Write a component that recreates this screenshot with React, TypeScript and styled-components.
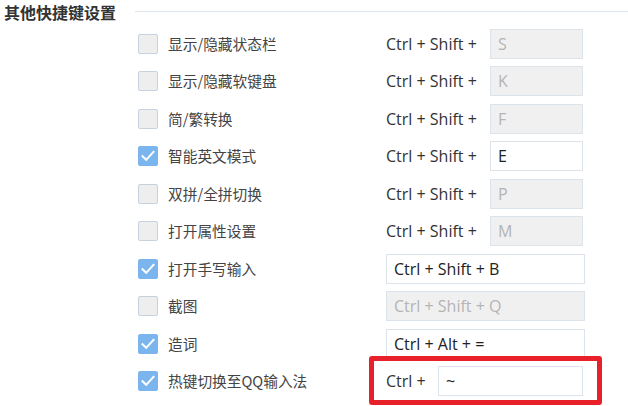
import React from "react";
import styled, { createGlobalStyle } from "styled-components";

const Global = createGlobalStyle`
  html, body { margin: 0; padding: 0; background: #ffffff; }
  body { width: 628px; height: 406px; overflow: hidden; }
`;

const Page = styled.div`
  position: relative;
  width: 628px;
  height: 406px;
  background: #ffffff;
  font-family: "Noto Sans CJK SC", "Microsoft YaHei", sans-serif;
`;

const Header = styled.div`
  display: flex;
  align-items: center;
  height: 25px;
  padding-left: 4px;
`;

const Title = styled.div`
  font-size: 16px;
  font-weight: 700;
  color: #333333;
  line-height: 25px;
  width: 131px;
`;

const Rule = styled.div`
  flex: 1;
  height: 1px;
  background: #dfe5ec;
  margin-top: -2px;
`;

const List = styled.div`
  display: grid;
  grid-template-columns: 20px 208px auto;
  grid-auto-rows: 37.5px;
  column-gap: 10px;
  align-items: center;
  padding-left: 138px;
`;

const Box = styled.div<{ $checked: boolean }>`
  width: 20px;
  height: 20px;
  box-sizing: border-box;
  border-radius: 2px;
  border: 1px solid ${(p) => (p.$checked ? "#7bb5ee" : "#c6d2df")};
  background: ${(p) => (p.$checked ? "#7bb5ee" : "#eeeeee")};
  display: flex;
  align-items: center;
  justify-content: center;
`;

const Label = styled.div`
  font-size: 14.7px;
  color: #444444;
  white-space: nowrap;
  line-height: 20px;
`;

const Shortcut = styled.div`
  display: flex;
  align-items: center;
  font-family: "Open Sans", "Noto Sans", sans-serif;
`;

const Prefix = styled.span<{ $w: number }>`
  width: ${(p) => p.$w}px;
  font-size: 16px;
  color: #333333;
  white-space: nowrap;
`;

const KeyInput = styled.div<{ $w: number; $disabled: boolean }>`
  box-sizing: border-box;
  width: ${(p) => p.$w}px;
  height: 30px;
  border: 1px solid #dce3ea;
  background: ${(p) => (p.$disabled ? "#f0f0f0" : "#ffffff")};
  color: ${(p) => (p.$disabled ? "#b4b4b4" : "#222222")};
  font-size: 16px;
  display: flex;
  align-items: center;
  padding-left: 7px;
  white-space: nowrap;
`;

const Highlight = styled.div`
  position: absolute;
  left: 369px;
  top: 356px;
  width: 233px;
  height: 49px;
  box-sizing: border-box;
  border: 5px solid #e8202a;
  border-radius: 3px;
  pointer-events: none;
`;

const Check = () => (
  <svg width="14" height="12" viewBox="0 0 14 12">
    <path d="M1.5 6.2 L5.2 9.8 L12.5 1.8" fill="none" stroke="#ffffff" strokeWidth="2" strokeLinecap="square" />
  </svg>
);

type Row = {
  label: string;
  checked: boolean;
  prefix?: string;
  prefixW?: number;
  value: string;
  inputW: number;
  disabled: boolean;
};

const rows: Row[] = [
  { label: "显示/隐藏状态栏", checked: false, prefix: "Ctrl + Shift +", prefixW: 104, value: "S", inputW: 93, disabled: true },
  { label: "显示/隐藏软键盘", checked: false, prefix: "Ctrl + Shift +", prefixW: 104, value: "K", inputW: 93, disabled: true },
  { label: "简/繁转换", checked: false, prefix: "Ctrl + Shift +", prefixW: 104, value: "F", inputW: 93, disabled: true },
  { label: "智能英文模式", checked: true, prefix: "Ctrl + Shift +", prefixW: 104, value: "E", inputW: 93, disabled: false },
  { label: "双拼/全拼切换", checked: false, prefix: "Ctrl + Shift +", prefixW: 104, value: "P", inputW: 93, disabled: true },
  { label: "打开属性设置", checked: false, prefix: "Ctrl + Shift +", prefixW: 104, value: "M", inputW: 93, disabled: true },
  { label: "打开手写输入", checked: true, value: "Ctrl + Shift + B", inputW: 199, disabled: false },
  { label: "截图", checked: false, value: "Ctrl + Shift + Q", inputW: 199, disabled: true },
  { label: "造词", checked: true, value: "Ctrl + Alt + =", inputW: 199, disabled: false },
  { label: "热键切换至QQ输入法", checked: true, prefix: "Ctrl +", prefixW: 52, value: "~", inputW: 145, disabled: false },
];

export default function App() {
  return (
    <Page>
      <Global />
      <Header>
        <Title>其他快捷键设置</Title>
        <Rule />
      </Header>
      <List>
        {rows.map((r) => (
          <React.Fragment key={r.label}>
            <Box $checked={r.checked}>{r.checked && <Check />}</Box>
            <Label>{r.label}</Label>
            <Shortcut>
              {r.prefix && <Prefix $w={r.prefixW!}>{r.prefix}</Prefix>}
              <KeyInput $w={r.inputW} $disabled={r.disabled}>{r.value}</KeyInput>
            </Shortcut>
          </React.Fragment>
        ))}
      </List>
      <Highlight />
    </Page>
  );
}
